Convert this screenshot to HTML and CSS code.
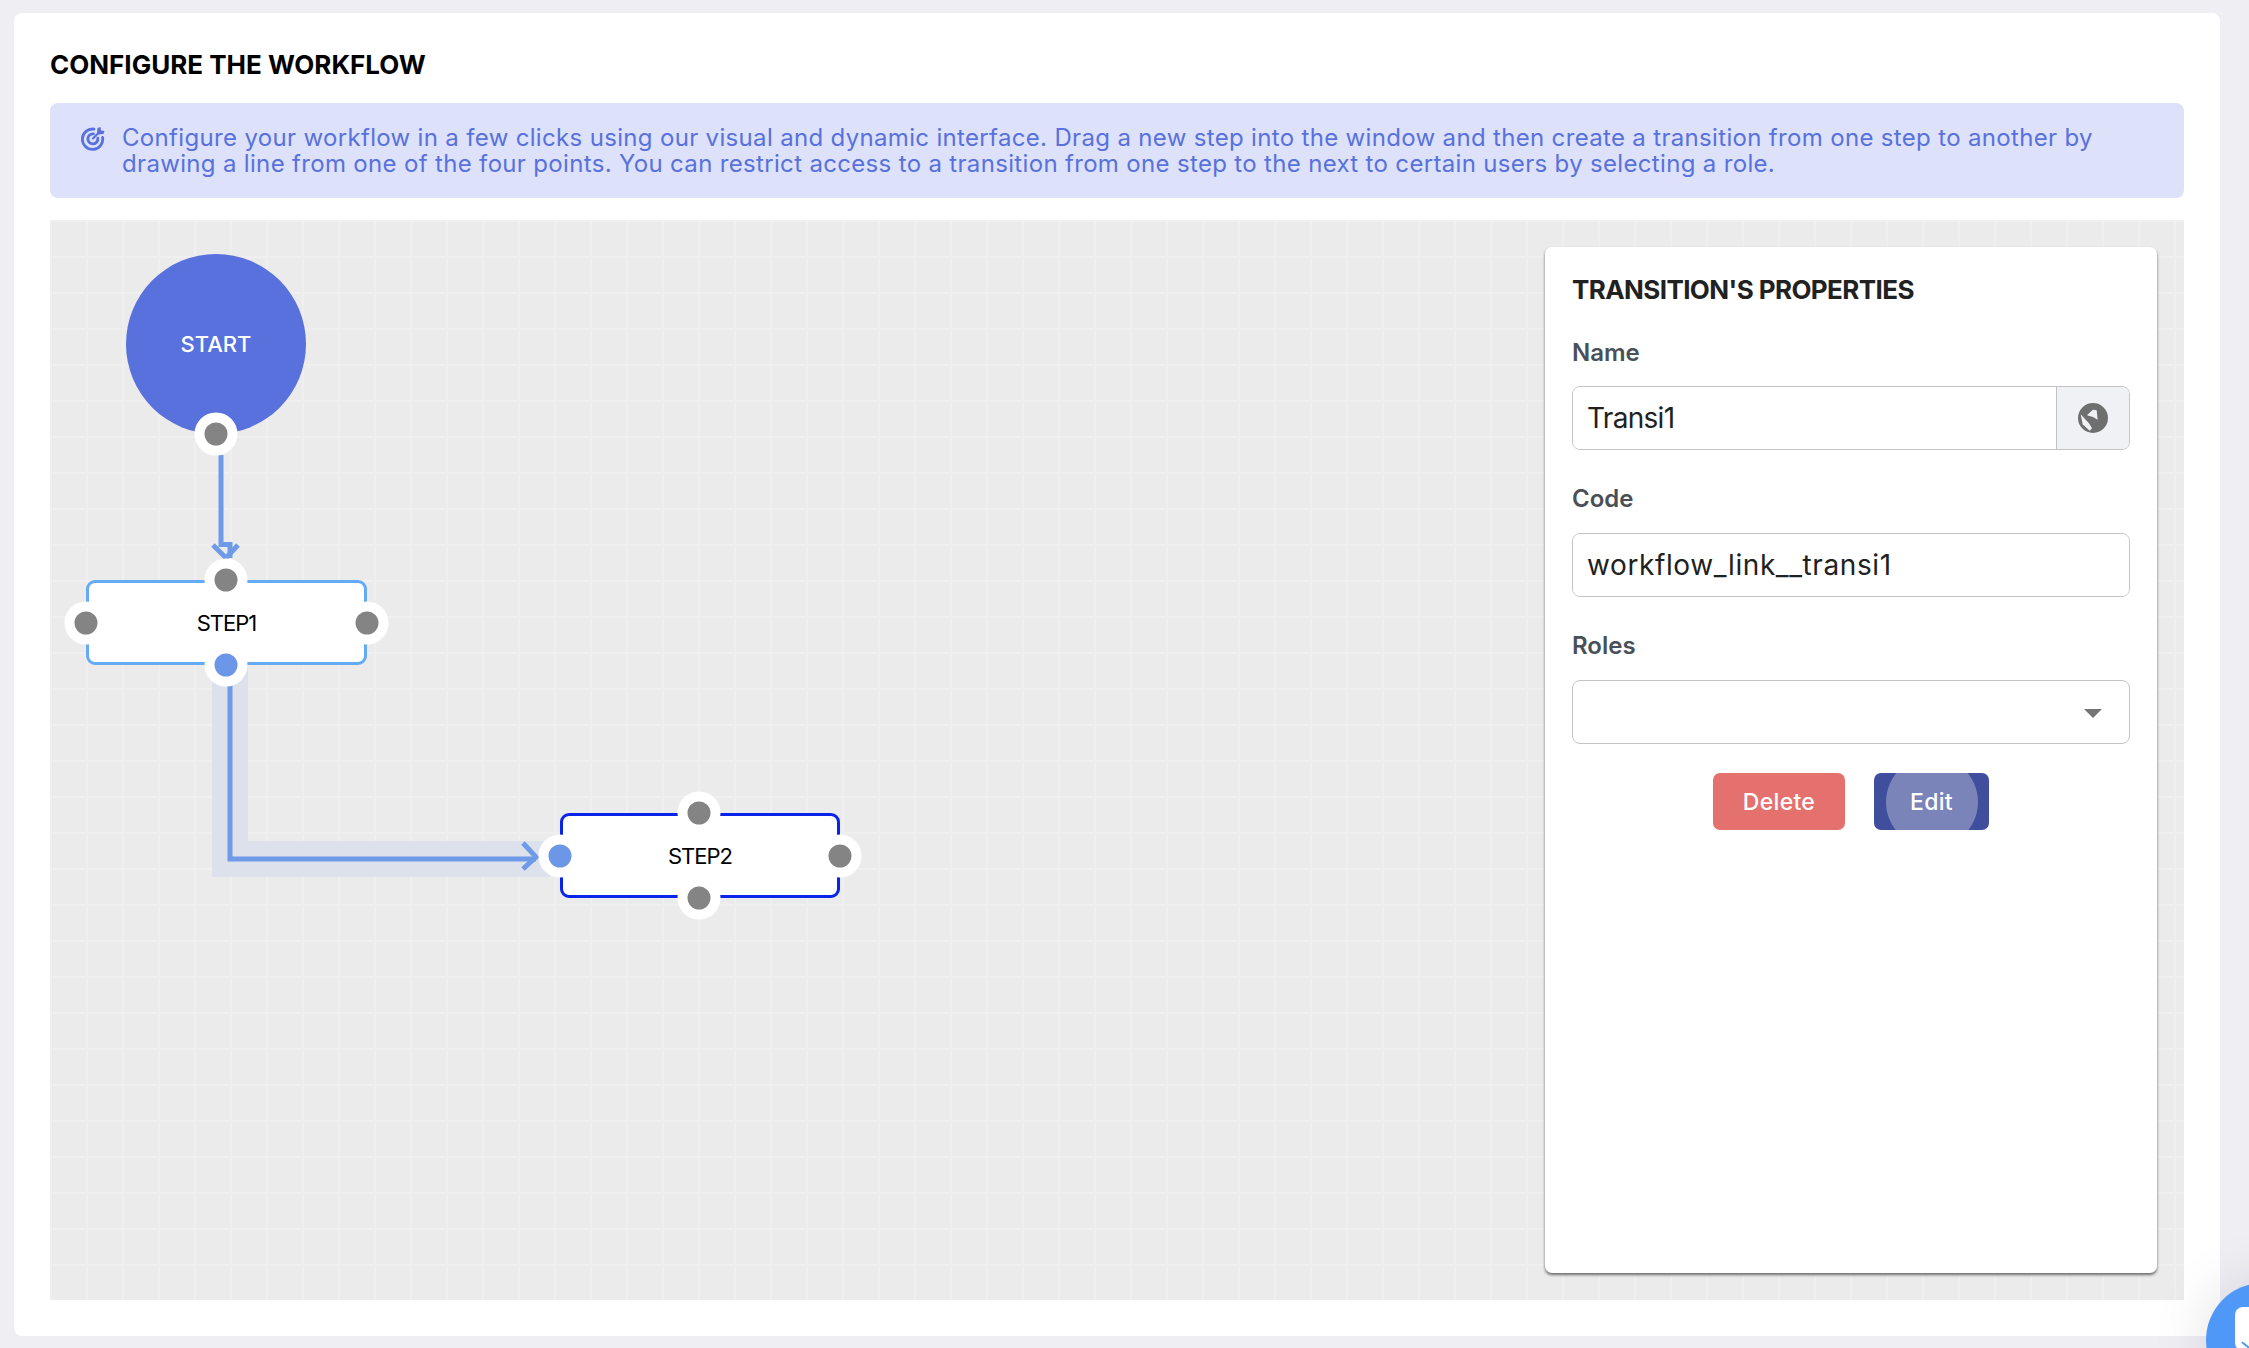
FILE: index.html
```html
<!DOCTYPE html>
<html lang="en">
<head>
    <meta charset="UTF-8">
    <meta name="viewport" content="width=device-width, initial-scale=1.0">
    <title>Configure the workflow</title>
    <link rel="stylesheet" href="styles.css">
</head>
<body>
    <div class="card">
        <h2 class="page-title">CONFIGURE THE WORKFLOW</h2>

        <div class="info-banner">
            <svg class="info-icon" viewBox="0 0 24 24" fill="none" stroke="currentColor" stroke-width="2.8" stroke-linecap="round">
                <path d="M13 2.6A10.2 10.2 0 1 0 21.6 11"/>
                <path d="M12.5 7.4A5 5 0 1 0 16.8 11.6"/>
                <path d="M12 12L18 6" stroke-width="2.2"/>
                <path d="M16 6.5L16.5 1.5L19.5 0.5L20 4L23.5 4.5L22.5 7.5L17.5 8Z" fill="currentColor" stroke="none"/>
            </svg>
            <p class="info-text">Configure your workflow in a few clicks using our visual and dynamic interface. Drag a new step into the window and then create a transition from one step to another by drawing a line from one of the four points. You can restrict access to a transition from one step to the next to certain users by selecting a role.</p>
        </div>

        <div class="canvas">
            <svg class="edges" width="2134" height="1080">
                <path class="edge-glow" d="M180 445V639H500"/>
                <path class="edge" d="M171 235V324.5H180V338"/>
                <path class="edge" d="M163 325L176 338L188 325"/>
                <path class="edge" d="M180 460V639H486"/>
                <path class="edge" d="M473 623L486 637L473 649"/>
            </svg>

            <div class="node node-start">
                START
                <span class="port port-bottom"></span>
            </div>

            <div class="node node-step node-step1">
                STEP1
                <span class="port port-top"></span>
                <span class="port port-left"></span>
                <span class="port port-right"></span>
                <span class="port port-bottom active"></span>
            </div>

            <div class="node node-step node-step2">
                STEP2
                <span class="port port-top"></span>
                <span class="port port-left active"></span>
                <span class="port port-right"></span>
                <span class="port port-bottom"></span>
            </div>

            <div class="panel">
                <h3 class="panel-title">TRANSITION'S PROPERTIES</h3>

                <div class="field">
                    <label class="field-label" for="name">Name</label>
                    <div class="input-group">
                        <input class="input-text input-name" type="text" id="name" value="Transi1">
                        <span class="input-addon">
                            <svg viewBox="0 0 90 90" width="30" height="30">
                                <circle cx="45" cy="45" r="45" fill="currentColor"/>
                                <path class="globe-land" d="M37 27L45 20L56 22L59 50L45 42L27 37Z"/>
                                <path class="globe-land" d="M8 34L34 62L42 76L35 83L14 64Z"/>
                            </svg>
                        </span>
                    </div>
                </div>

                <div class="field">
                    <label class="field-label" for="code">Code</label>
                    <div class="input-group">
                        <input class="input-text input-code" type="text" id="code" value="workflow_link__transi1">
                    </div>
                </div>

                <div class="field">
                    <span class="field-label">Roles</span>
                    <div class="input-group select-box">
                        <span class="select-arrow"></span>
                    </div>
                </div>

                <div class="actions">
                    <button class="btn btn-delete">Delete</button>
                    <button class="btn btn-edit"><span class="ripple"></span><span class="btn-label">Edit</span></button>
                </div>
            </div>
        </div>
    </div>

    <div class="chat-bubble"><span class="chat-icon"><span class="chat-mark"></span></span></div>
</body>
</html>
```

FILE: styles.css
```css
* {
    box-sizing: border-box;
}

html, body {
    height: 100%;
}

body {
    margin: 0;
    padding: 13px 29px 12px 14px;
    background-color: #eeeef3;
    font-family: Inter, "Liberation Sans", sans-serif;
    overflow: hidden;
}

.card {
    background-color: #fff;
    border-radius: 8px;
    padding: 32px 36px 36px;
}

.page-title {
    margin: 0 0 18px;
    font-size: 26px;
    line-height: 40px;
    font-weight: 700;
    color: #000;
}

.info-banner {
    display: flex;
    height: 95px;
    padding: 22px 31px 0;
    gap: 17px;
    background-color: #dde1fa;
    border-radius: 8px;
    color: #5871dc;
    margin-bottom: 22px;
}

.info-icon {
    width: 24px;
    height: 25px;
    margin-top: 1px;
    flex: none;
}

.info-text {
    margin: 0;
    font-size: 24px;
    line-height: 26px;
    letter-spacing: 0.33px;
}

/* free canvas, grid lines every 36px */
.canvas {
    position: relative;
    height: 1080px;
    background-color: #ebebeb;
    background-image:
        linear-gradient(#efefef 2px, transparent 2px),
        linear-gradient(90deg, #efefef 2px, transparent 2px);
    background-size: 36px 36px;
}

.edges {
    position: absolute;
    left: 0;
    top: 0;
}

.edge {
    fill: none;
    stroke: #6f9ae8;
    stroke-width: 5;
}

.edge-glow {
    fill: none;
    stroke: #dde1ec;
    stroke-width: 36;
}

.node {
    position: absolute;
    display: flex;
    align-items: center;
    justify-content: center;
    font-size: 22px;
}

.node-start {
    left: 76px;
    top: 34px;
    width: 180px;
    height: 180px;
    border-radius: 50%;
    background-color: #5871dc;
    color: #fff;
    font-weight: 500;
}

.node-step {
    height: 85px;
    background-color: #fff;
    border: 3px solid #64aaf5;
    border-radius: 9px;
    color: #000;
    letter-spacing: -1px;
}

.node-step1 {
    left: 36px;
    top: 360px;
    width: 281px;
}

.node-step2 {
    left: 510px;
    top: 593px;
    width: 280px;
    border-color: #0a23ea;
}

.port {
    position: absolute;
    width: 43px;
    height: 43px;
    border-radius: 50%;
    background-color: #848484;
    border: 10.5px solid #fff;
    transform: translate(-50%, -50%);
}

.port.active {
    background-color: #6c96e8;
}

/* ports sit on the node's outer edge, 3px border included */
.port-top {
    left: calc(50% - 1px);
    top: -3px;
}

.port-bottom {
    left: calc(50% - 1px);
    top: calc(100% + 3px);
}

.port-left {
    left: -3px;
    top: 50%;
}

.port-right {
    left: calc(100% + 3px);
    top: 50%;
}

.node-start .port-bottom {
    left: 50%;
    top: 100%;
}

.panel {
    position: absolute;
    right: 27px;
    top: 27px;
    width: 612px;
    height: 1026px;
    padding: 27px;
    background-color: #fff;
    border-radius: 7px;
    box-shadow: 0 2px 3px rgba(0, 0, 0, 0.55);
}

.panel-title {
    margin: 0 0 32px;
    font-size: 26px;
    line-height: 32px;
    font-weight: 700;
    letter-spacing: -0.6px;
    color: #212121;
}

.field + .field {
    margin-top: 35px;
}

.field-label {
    display: block;
    height: 30px;
    margin-bottom: 18px;
    font-size: 24px;
    line-height: 30px;
    font-weight: 600;
    color: #495057;
}

.field + .field .field-label {
    margin-top: -1px;
    margin-bottom: 19px;
}

.input-group {
    display: flex;
    align-items: stretch;
    position: relative;
    height: 64px;
    border: 1px solid #c4c4c4;
    border-radius: 8px;
    overflow: hidden;
    background-color: #fff;
}

.input-text {
    flex: 1;
    min-width: 0;
    padding: 0 14px;
    border: none;
    outline: none;
    font-family: inherit;
    font-size: 28px;
    color: #212121;
}

.input-name {
    letter-spacing: -0.7px;
}

.input-code {
    letter-spacing: 0.6px;
}

.input-addon {
    display: flex;
    align-items: center;
    justify-content: center;
    width: 73px;
    background-color: #f0f1f5;
    border-left: 1px solid #c4c4c4;
    color: #6f6f6f;
}

.globe-land {
    fill: #f0f1f5;
}

.select-arrow {
    position: absolute;
    right: 27px;
    top: 28px;
    border-left: 9px solid transparent;
    border-right: 9px solid transparent;
    border-top: 9px solid #757575;
}

.actions {
    display: flex;
    justify-content: center;
    gap: 29px;
    margin-top: 29px;
}

.btn {
    position: relative;
    height: 57px;
    border: none;
    border-radius: 7px;
    overflow: hidden;
    font-family: inherit;
    font-size: 23px;
    font-weight: 500;
    letter-spacing: 0.3px;
    color: #fff;
}

.btn-delete {
    width: 132px;
    background-color: #e5716f;
}

.btn-edit {
    width: 115px;
    background-color: #3f4f9e;
}

.btn-label {
    position: relative;
}

.ripple {
    position: absolute;
    left: 12px;
    top: -17.5px;
    width: 92px;
    height: 92px;
    border-radius: 50%;
    background-color: #7a84b8;
}

.chat-bubble {
    position: fixed;
    left: 2206px;
    top: 1283px;
    width: 114px;
    height: 114px;
    border-radius: 50%;
    background-color: #4f98f8;
    box-shadow: 0 0 60px rgba(0, 0, 40, 0.12);
}

.chat-icon {
    position: absolute;
    left: 29px;
    top: 24px;
    width: 40px;
    height: 44px;
    border-radius: 8px;
    background-color: #fff;
}

.chat-mark {
    position: absolute;
    left: 6px;
    top: 37px;
    width: 9px;
    height: 2px;
    background-color: #4f98f8;
    transform: rotate(38deg);
}
```
